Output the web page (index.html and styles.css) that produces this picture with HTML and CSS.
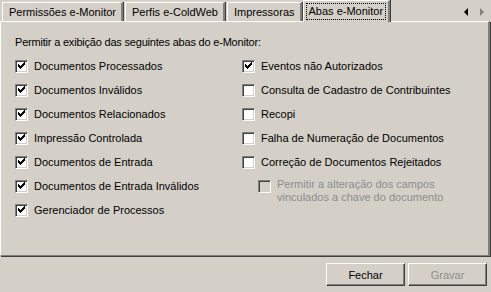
FILE: index.html
```html
<!DOCTYPE html>
<html lang="pt">
<head>
<meta charset="UTF-8">
<title>Abas e-Monitor</title>
<link rel="stylesheet" href="styles.css">
</head>
<body>
	<div class="dlg">
		<div class="tabs">
			<div class="tab">Permissões e-Monitor</div>
			<div class="tab">Perfis e-ColdWeb</div>
			<div class="tab">Impressoras</div>
			<div class="tab active"><span class="focus">Abas e-Monitor</span></div>
			<div class="arrows">
				<svg width="8" height="9" viewBox="0 0 8 9"><path d="M5 0 L5 8 L1 4 Z" fill="#000"/></svg>
				<svg width="8" height="9" viewBox="0 0 8 9"><path d="M2 0 L2 8 L6 4 Z" fill="#808080"/></svg>
			</div>
		</div>
		<div class="panel">
			<p class="intro">Permitir a exibição das seguintes abas do e-Monitor:</p>
			<div class="cols">
				<ul class="list">
					<li><span class="chk on"></span>Documentos Processados</li>
					<li><span class="chk on"></span>Documentos Inválidos</li>
					<li><span class="chk on"></span>Documentos Relacionados</li>
					<li><span class="chk on"></span>Impressão Controlada</li>
					<li><span class="chk on"></span>Documentos de Entrada</li>
					<li><span class="chk on"></span>Documentos de Entrada Inválidos</li>
					<li><span class="chk on"></span>Gerenciador de Processos</li>
				</ul>
				<ul class="list">
					<li><span class="chk on"></span>Eventos não Autorizados</li>
					<li><span class="chk"></span>Consulta de Cadastro de Contribuintes</li>
					<li><span class="chk"></span>Recopi</li>
					<li><span class="chk"></span>Falha de Numeração de Documentos</li>
					<li><span class="chk"></span>Correção de Documentos Rejeitados</li>
					<li class="sub"><span class="chk off"></span><span>Permitir a alteração dos campos<br>vinculados a chave do documento</span></li>
				</ul>
			</div>
		</div>
		<div class="footer">
			<button class="btn">Fechar</button>
			<button class="btn" disabled>Gravar</button>
		</div>
	</div>
</body>
</html>
```

FILE: styles.css
```css
* { padding: 0; margin: 0; box-sizing: border-box; }
li { list-style: none; }

body { background: #d4d0c8; font-family: "Liberation Sans", Arial, sans-serif; font-size: 11px; color: #000; }

.dlg { width: 491px; height: 292px; }

/* tab strip */
.tabs { height: 21px; display: flex; align-items: flex-end; padding-left: 2px; }
.tab { height: 19px; padding: 0 5px 0 6px; display: flex; align-items: center; border-top: 1px solid #fff; border-left: 1px solid #fff; border-right: 2px solid #808080; box-shadow: 1px 0 0 #404040; margin-right: 2px; white-space: nowrap; }
.tab.active { height: 22px; margin-bottom: -1px; padding: 0 3px; margin-left: -1px; position: relative; z-index: 2; background: #d4d0c8; }
.focus { outline: 1px dotted #000; padding: 1px 2px; line-height: 13px; }
.arrows { margin-left: auto; align-self: center; display: flex; gap: 7px; padding-right: 5px; padding-top: 3px; }

/* content */
.panel { height: 235px; border-top: 1px solid #fff; border-left: 1px solid #fff; border-right: 2px solid #808080; border-bottom: 1px solid #808080; box-shadow: 1px 1px 0 #404040; margin-right: 1px; margin-bottom: 1px; padding: 14px 0 0 14px; }
.intro { line-height: 13px; margin-bottom: 5px; letter-spacing: -0.2px; }
.cols { display: grid; grid-template-columns: 227px 1fr; }
.list li { height: 24px; display: flex; align-items: center; gap: 6px; }
.list li.sub { height: auto; align-items: flex-start; padding: 4px 0 0 16px; color: #8d8d8d; line-height: 13px; }
.list li.sub .chk { margin-top: 2px; }

.chk { width: 13px; height: 13px; flex: none; background: #fff; border-top: 1px solid #808080; border-left: 1px solid #808080; border-right: 1px solid #fff; border-bottom: 1px solid #fff; box-shadow: inset 1px 1px 0 #404040, inset -1px -1px 0 #d4d0c8; position: relative; }
.chk.on::after { content: ""; position: absolute; left: 2px; top: 1px; width: 7px; height: 7px; background: no-repeat center / 7px 7px url("data:image/svg+xml,%3Csvg xmlns='http://www.w3.org/2000/svg' width='7' height='7' shape-rendering='crispEdges'%3E%3Cpath d='M6 0h1v3h-1zM5 1h1v3h-1zM4 2h1v3h-1zM3 3h1v3h-1zM2 4h1v3h-1zM1 3h1v3h-1zM0 2h1v3h-1z' fill='%23000'/%3E%3C/svg%3E"); }
.chk.off { background: #d4d0c8; }

/* buttons */
.footer { display: flex; justify-content: flex-end; gap: 3px; padding: 6px 4px 0 0; }
.btn { width: 79px; height: 23px; font: inherit; color: #000; background: #d4d0c8; border-top: 1px solid #fff; border-left: 1px solid #fff; border-right: 1px solid #404040; border-bottom: 1px solid #404040; box-shadow: inset -1px -1px 0 #808080; }
.btn:disabled { color: #8d8d8d; }
```
